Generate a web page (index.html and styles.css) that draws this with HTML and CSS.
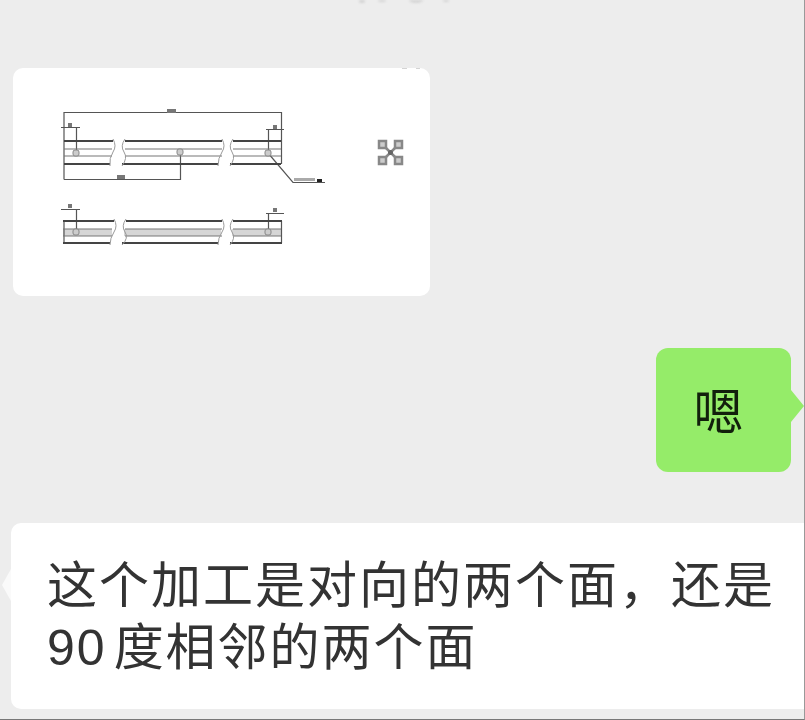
FILE: index.html
```html
<!DOCTYPE html>
<html lang="zh-CN">
<head>
    <meta charset="UTF-8">
    <title>Chat</title>
    <link rel="stylesheet" href="styles.css">
</head>
<body>
    <div class="chat">
        <!-- Clipped timestamp at the top edge -->
        <svg class="time-smudge" width="100" height="5" viewBox="0 0 100 5">
            <g fill="#d4d4d4">
                <ellipse cx="4" cy="1" rx="3" ry="2"/>
                <ellipse cx="24" cy="0" rx="4" ry="2"/>
                <ellipse cx="58" cy="0" rx="7" ry="3"/>
                <ellipse cx="88" cy="0" rx="3" ry="2"/>
            </g>
        </svg>

        <!-- Drawing message -->
        <div class="msg msg-image">
            <svg class="drawing" width="417" height="228" viewBox="13 68 417 228" fill="none">
                <path d="M402 68H407M416 68H420" stroke="#aaa"/>
                <g fill="#d6d6d6">
                    <rect x="63" y="229" width="49" height="7"/>
                    <rect x="124" y="229" width="97" height="7"/>
                    <rect x="232" y="229" width="50" height="7"/>
                </g>
                <!-- dimensions -->
                <g stroke="#555" stroke-width="1.200">
                    <path d="M64 179.500V112.500H281.500V164M64 179.500H180.500V150"/>
                    <path d="M61 127.500H80M76.500 127V153M266 129.500H284M268.500 129V153"/>
                    <path d="M61 209.500H80M76.500 209V232M266 213.500H284M268.500 213V232"/>
                    <path d="M64 221V243M281.500 221V243"/>
                    <path d="M268 153L293 182.500H325"/>
                </g>
                <!-- top view bars -->
                <g stroke="#444" stroke-width="2">
                    <path d="M64 141H113M125 141H222M233 141H281"/>
                    <path d="M64 164H110M122 164H218M230 164H281"/>
                    <path d="M63 221H114M126 221H222M233 221H282"/>
                    <path d="M63 243H110M122 243H218M230 243H282"/>
                </g>
                <g stroke="#777" stroke-width="1.200">
                    <path d="M64 149H112M125 149H222M233 149H281M64 156H112M125 156H222M233 156H281"/>
                    <path d="M63 229H112M125 229H222M233 229H281M63 236H112M125 236H222M233 236H281"/>
                </g>
                <!-- break marks -->
                <g stroke="#999">
                    <path d="M113 139Q117 146 113 152T110 166M125 139Q120 146 124 152T122 166"/>
                    <path d="M222 139Q226 146 222 152T218 166M233 139Q228 146 232 152T230 166"/>
                    <path d="M114 219Q118 226 114 232T110 245M126 219Q121 226 125 232T122 245"/>
                    <path d="M222 219Q226 226 222 232T218 245M233 219Q228 226 232 232T230 245"/>
                </g>
                <!-- dimension labels -->
                <g fill="#777">
                    <rect x="167" y="109" width="9" height="4"/>
                    <rect x="117" y="175" width="8" height="4"/>
                    <rect x="68" y="123" width="4" height="4"/>
                    <rect x="273" y="125" width="4" height="4"/>
                    <rect x="68" y="204" width="4" height="4"/>
                    <rect x="273" y="208" width="4" height="4"/>
                    <rect x="294" y="178" width="21" height="3" fill="#aaa"/>
                </g>
                <rect x="317" y="179" width="5" height="3" fill="#222"/>
                <!-- holes -->
                <g stroke="#888" fill="#ccc">
                    <rect x="73" y="150" width="6" height="6" rx="2"/>
                    <rect x="177" y="149" width="6" height="6" rx="2"/>
                    <rect x="265" y="150" width="6" height="6" rx="2"/>
                    <rect x="73" y="229" width="6" height="6" rx="2"/>
                    <rect x="265" y="229" width="6" height="6" rx="2"/>
                </g>
                <!-- profile section -->
                <g stroke="#888" stroke-width="2.500" fill="#ccc">
                    <rect x="379" y="141" width="7" height="7"/>
                    <rect x="395" y="141" width="7" height="7"/>
                    <rect x="379" y="157" width="7" height="7"/>
                    <rect x="395" y="157" width="7" height="7"/>
                </g>
                <path d="M386 148L395 157M395 148L386 157" stroke="#888" stroke-width="2.500"/>
                <circle cx="390.500" cy="152.500" r="2.500" fill="#666"/>
            </svg>
        </div>

        <!-- Reply -->
        <div class="msg msg-reply">
            <div class="bubble-green">嗯</div>
        </div>

        <!-- Question -->
        <div class="msg msg-text">
            <div class="bubble-white">这个加工是对向的两个面，还是<br><span class="digits">90</span>度相邻的两个面</div>
        </div>
    </div>
</body>
</html>
```

FILE: styles.css
```css
* {
    margin: 0;
    padding: 0;
    box-sizing: border-box;
}

body {
    background: #ededed;
    height: 720px;
    overflow: hidden;
    border-right: 1px solid #999;
    border-bottom: 1px solid #777;
    font-family: "Liberation Sans", "Noto Sans CJK SC", sans-serif;
}

.chat {
    display: flex;
    flex-direction: column;
}

.time-smudge {
    display: block;
    margin-left: 358px;
    margin-bottom: 63px;
    filter: blur(1px);
}

.msg-image {
    width: 417px;
    height: 228px;
    margin-left: 13px;
    background: #fff;
    border-radius: 10px;
}

.drawing {
    display: block;
    filter: blur(0.7px);
}

.msg-reply {
    display: flex;
    justify-content: flex-end;
    margin-top: 52px;
    padding-right: 13px;
}

.bubble-green {
    position: relative;
    width: 135px;
    height: 124px;
    display: flex;
    align-items: center;
    justify-content: center;
    padding: 0 10px 5px 0;
    background: #95ec69;
    border-radius: 12px;
    color: #12200c;
    font-size: 50px;
}

.bubble-green::after {
    content: "";
    position: absolute;
    right: -13px;
    top: 42px;
    border-left: 13px solid #95ec69;
    border-top: 16px solid transparent;
    border-bottom: 16px solid transparent;
}

.msg-text {
    margin-top: 51px;
    padding-left: 11px;
}

.bubble-white {
    position: relative;
    height: 186px;
    padding: 32px 0 0 36px;
    background: #fff;
    border-radius: 10px 0 0 10px;
    color: #333;
    font-size: 50px;
    letter-spacing: 2px;
    line-height: 62px;
    white-space: nowrap;
}

.digits {
    margin-right: 7px;
}

.bubble-white::before {
    content: "";
    position: absolute;
    left: -9px;
    top: 46px;
    border-right: 9px solid #fafafa;
    border-top: 16px solid transparent;
    border-bottom: 16px solid transparent;
}
```
